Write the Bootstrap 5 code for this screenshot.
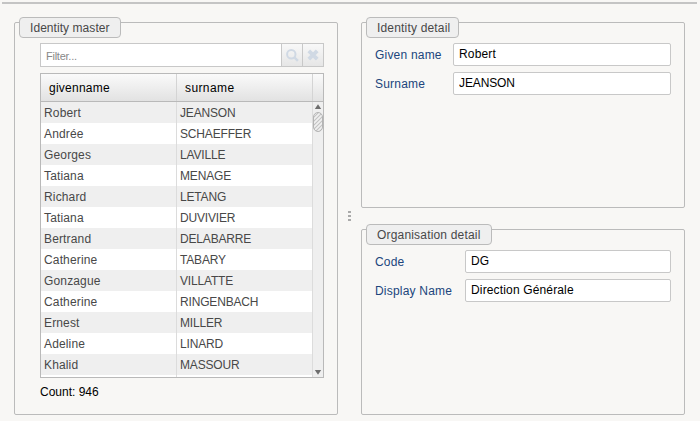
<!DOCTYPE html>
<html lang="en">
<head>
<meta charset="utf-8">
<meta name="viewport" content="width=device-width, initial-scale=1">
<title>Identity master</title>
<link href="https://cdn.jsdelivr.net/npm/bootstrap@5.3.0/dist/css/bootstrap.min.css" rel="stylesheet">
<style>
body{height:421px;overflow:hidden;background:#f8f7f5;color:#000;font:12px/15px "Liberation Sans",Arial,sans-serif}
.top-rule{height:2px;margin:2px 3px 0 2px;background:#c4c4c4}
.workspace{padding:18px 15px 0 14px}
.panel{width:324px;border:1px solid #bbb;border-radius:2px}
.panel-master{height:393px}
.panel-top{height:186px}
.panel-bottom{height:186px}
.panel-title{height:21px;margin:-6px 0 0 4px;padding:3px 10px 0;border:1px solid #bbb;border-radius:4px;background:#efefef;color:#484848;letter-spacing:.18px;white-space:nowrap}
.w-title-a{width:102px;letter-spacing:.06px}.w-title-b{width:93px}.w-title-c{width:126px}
.master-body{margin:5px 13px 0 25px}
.filter{height:24px;border:1px solid #c8c8c8;background:#fff}
.filter input{font-size:11px;padding:3px 0 0 5px;color:#555;outline:0;min-width:0;letter-spacing:-.25px}
.filter input::placeholder{color:#888;opacity:1}
.tool{width:21px;border:0;border-left:1px solid #c8c8c8;background:linear-gradient(#f8f8f8,#e6e6e6);padding:0}
.grid-box{height:305px;margin-top:6px;border:1px solid #b9b9b9;background:#fff}
.grid-head{height:28px;border-bottom:1px solid #b9b9b9;background:linear-gradient(#fafafa,#e2e2e2);letter-spacing:.25px}
.col-a{width:136px;border-right:1px solid #dcdcdc;flex:none}
.col-b{width:136px;border-right:1px solid #dcdcdc;flex:none}
.grid-head .col-a,.grid-head .col-b{padding:7px 0 0 8px;border-color:#d4d4d4}
.grid-head .col-b{letter-spacing:.4px}
.line{height:21px;color:#484848}
.line:nth-child(odd){background:#efefef}
.line .col-a,.line .col-b{padding:4px 0 0 3px}
.line .col-a{letter-spacing:.15px}
.line .col-b{letter-spacing:-.17px}
.tail{height:2px}
.scroller{width:10px;background:#efefef}
.fields{margin:5px 13px 0;gap:6px}
.fields label{color:#20457c;padding-top:5px;letter-spacing:.2px;white-space:nowrap}
.fields input{height:23px;min-height:0;padding:0 5px 1px;border:1px solid #c8c8c8;border-radius:2px;background:#fff;font-size:12px;line-height:15px;color:#000;flex:none;letter-spacing:.15px}
.fields #sur{letter-spacing:-.12px}
.fields-a label{width:78px}.fields-a input{width:218px}
.fields-b label{width:90px}.fields-b input{width:206px}
.splitter{width:23px;padding-top:189px}
.splitter svg{margin-left:10px}
.right-col{gap:21px}
.total{padding-top:7px}
</style>
<script src="https://cdn.jsdelivr.net/npm/bootstrap@5.3.0/dist/js/bootstrap.bundle.min.js"></script>
</head>
<body class="d-flex flex-column">
<div class="top-rule"></div>
<main class="workspace d-flex">
  <section class="panel panel-master">
    <div class="panel-title w-title-a">Identity master</div>
    <div class="master-body">
      <div class="filter d-flex">
        <input class="border-0 flex-grow-1 bg-transparent" type="text" placeholder="Filter..." aria-label="Filter">
        <button class="tool d-flex align-items-center justify-content-center" aria-label="Search"><svg width="13" height="13" viewBox="0 0 13 13" fill="none" stroke="#d0d9e4" stroke-width="2"><circle cx="5.3" cy="5.3" r="4.2"/><path d="M8.3 8.3l3.6 3.6" stroke-width="2.4"/></svg></button>
        <button class="tool d-flex align-items-center justify-content-center" aria-label="Clear"><svg width="12" height="12" viewBox="0 0 12 12" stroke="#d0d9e4" stroke-width="3.8"><path d="M1.8 1.8l8.4 8.4M10.2 1.8l-8.4 8.4"/></svg></button>
      </div>
      <div class="grid-box">
        <div class="grid-head d-flex"><div class="col-a">givenname</div><div class="col-b">surname</div></div>
        <div class="d-flex">
          <div>
            <div class="line d-flex"><div class="col-a">Robert</div><div class="col-b">JEANSON</div></div>
            <div class="line d-flex"><div class="col-a">Andrée</div><div class="col-b">SCHAEFFER</div></div>
            <div class="line d-flex"><div class="col-a">Georges</div><div class="col-b">LAVILLE</div></div>
            <div class="line d-flex"><div class="col-a">Tatiana</div><div class="col-b">MENAGE</div></div>
            <div class="line d-flex"><div class="col-a">Richard</div><div class="col-b">LETANG</div></div>
            <div class="line d-flex"><div class="col-a">Tatiana</div><div class="col-b">DUVIVIER</div></div>
            <div class="line d-flex"><div class="col-a">Bertrand</div><div class="col-b">DELABARRE</div></div>
            <div class="line d-flex"><div class="col-a">Catherine</div><div class="col-b">TABARY</div></div>
            <div class="line d-flex"><div class="col-a">Gonzague</div><div class="col-b">VILLATTE</div></div>
            <div class="line d-flex"><div class="col-a">Catherine</div><div class="col-b">RINGENBACH</div></div>
            <div class="line d-flex"><div class="col-a">Ernest</div><div class="col-b">MILLER</div></div>
            <div class="line d-flex"><div class="col-a">Adeline</div><div class="col-b">LINARD</div></div>
            <div class="line d-flex"><div class="col-a">Khalid</div><div class="col-b">MASSOUR</div></div>
            <div class="tail d-flex"><div class="col-a"></div><div class="col-b"></div></div>
          </div>
          <div class="scroller">
            <svg class="d-block" width="10" height="275" viewBox="0 0 10 275">
              <defs><pattern id="hatch" width="4" height="4" patternUnits="userSpaceOnUse"><path d="M-1 1l2-2M0 4l4-4M3 5l2-2" stroke="#c2c2c2" stroke-width="1.1"/></pattern></defs>
              <path d="M5 2.2L8.2 7H1.8z" fill="#6e6e6e"/>
              <rect x=".5" y="10.5" width="9" height="19" rx="4.5" fill="#f0f0f0"/>
              <rect x=".5" y="10.5" width="9" height="19" rx="4.5" fill="url(#hatch)" stroke="#b4b4b4"/>
              <path d="M5 272.8L8.2 268H1.8z" fill="#6e6e6e"/>
            </svg>
          </div>
        </div>
      </div>
      <div class="total text-nowrap">Count: 946</div>
    </div>
  </section>
  <div class="splitter"><svg class="d-block" width="3" height="11" fill="#aaa"><path d="M0 0h3v2H0zM0 4h3v2H0zM0 8h3v2H0z"/></svg></div>
  <div class="right-col d-flex flex-column">
    <section class="panel panel-top">
      <div class="panel-title w-title-b">Identity detail</div>
      <div class="fields fields-a d-flex flex-column">
        <div class="d-flex"><label for="given">Given name</label><input class="form-control" id="given" value="Robert"></div>
        <div class="d-flex"><label for="sur">Surname</label><input class="form-control" id="sur" value="JEANSON"></div>
      </div>
    </section>
    <section class="panel panel-bottom">
      <div class="panel-title w-title-c">Organisation detail</div>
      <div class="fields fields-b d-flex flex-column">
        <div class="d-flex"><label for="code">Code</label><input class="form-control" id="code" value="DG"></div>
        <div class="d-flex"><label for="disp">Display Name</label><input class="form-control" id="disp" value="Direction Générale"></div>
      </div>
    </section>
  </div>
</main>
</body>
</html>
